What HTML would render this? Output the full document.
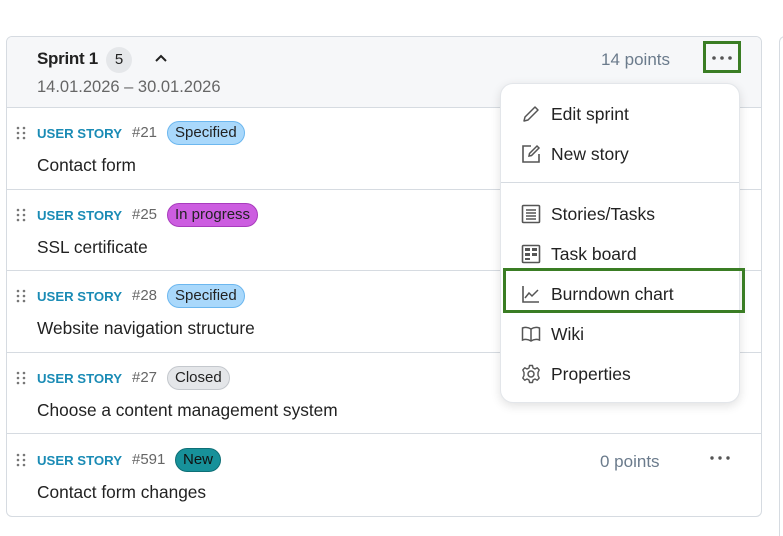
<!DOCTYPE html>
<html><head><style>
*{box-sizing:border-box;margin:0;padding:0}
body{width:783px;height:531px;background:#fff;font-family:"Liberation Sans",sans-serif;color:#222;position:relative;overflow:hidden}
.card{position:absolute;left:6px;top:36px;width:756px;height:481px;border:1px solid #d6dbe1;border-radius:6px;overflow:hidden;background:#fff}
.side{position:absolute;left:779px;top:36px;width:10px;height:500px;border-left:1px solid #d6dbe1;border-top:1px solid #d6dbe1;border-radius:6px 0 0 0}
.hdr{position:absolute;left:0;top:0;right:0;height:71px;background:#f6f7f9;border-bottom:1px solid #d6dbe1}
.t{position:absolute;white-space:nowrap}
.row{position:absolute;left:0;right:0;border-bottom:1px solid #d6dbe1}
.us{color:#1a8bb5;font-weight:bold;font-size:13.2px}
.num{color:#666;font-size:15px}
.badge{position:absolute;height:24px;border-radius:12px;font-size:15px;line-height:22px;padding:0 7px;border:1px solid}
.title{font-size:17.3px;color:#222}
.menu{position:absolute;left:500px;top:83px;width:240px;height:320px;background:#fff;border:1px solid #e3e6ea;border-radius:13px;box-shadow:0 3px 10px rgba(0,0,0,.12)}
.mi{position:absolute;left:50px;font-size:17.5px;color:#222}
.ic{position:absolute;left:20px;width:20px;height:20px}
</style></head><body>
<div class="side"></div>
<div class="card">
 <div class="hdr">
  <div class="t" style="left:30px;top:12px;font-size:17px;font-weight:bold;letter-spacing:-0.3px">Sprint 1</div>
  <div class="t" style="left:99px;top:10px;width:26px;height:26px;border-radius:13px;background:#e5e7ea;text-align:center;line-height:26px;font-size:15px">5</div>
  <svg class="t" style="left:147px;top:16px" width="14" height="10" viewBox="0 0 14 10"><path d="M2 8 L7 3 L12 8" fill="none" stroke="#222" stroke-width="2"/></svg>
  <div class="t" style="left:30px;top:41px;font-size:16.5px;color:#666">14.01.2026 – 30.01.2026</div>
  <div class="t" style="left:594px;top:13px;font-size:17px;color:#6b7b8c">14 points</div>
  <div class="t" style="left:696px;top:4px;width:38px;height:32px;border:3px solid #3a7d24"></div>
  <svg class="t" style="left:703px;top:18px" width="24" height="6"><circle cx="4" cy="3" r="1.8" fill="#555"/><circle cx="12" cy="3" r="1.8" fill="#555"/><circle cx="20" cy="3" r="1.8" fill="#555"/></svg>
 </div>
 <div class="row" style="top:71px;height:82px"></div>
 <div class="row" style="top:153px;height:81px"></div>
 <div class="row" style="top:234px;height:82px"></div>
 <div class="row" style="top:316px;height:81px"></div>
</div>
<svg width="783" height="531" style="position:absolute;left:0;top:0">
 <g fill="#777">
  <g id="g"><circle cx="18" cy="128" r="1.3"/><circle cx="24" cy="128" r="1.3"/><circle cx="18" cy="133" r="1.3"/><circle cx="24" cy="133" r="1.3"/><circle cx="18" cy="138" r="1.3"/><circle cx="24" cy="138" r="1.3"/></g>
  <use href="#g" y="82"/><use href="#g" y="163"/><use href="#g" y="245"/><use href="#g" y="327"/>
 </g>
</svg>
<div class="t us" style="left:37px;top:126px">USER STORY</div><div class="t num" style="left:132px;top:124px">#21</div>
<div class="badge" style="left:167px;top:121px;background:#a9d8fb;border-color:#6cb7ef">Specified</div>
<div class="t title" style="left:37px;top:155px">Contact form</div>
<div class="t us" style="left:37px;top:208px">USER STORY</div><div class="t num" style="left:132px;top:206px">#25</div>
<div class="badge" style="left:167px;top:203px;background:#cc5de0;border-color:#a83cbd">In progress</div>
<div class="t title" style="left:37px;top:237px">SSL certificate</div>
<div class="t us" style="left:37px;top:289px">USER STORY</div><div class="t num" style="left:132px;top:287px">#28</div>
<div class="badge" style="left:167px;top:284px;background:#a9d8fb;border-color:#6cb7ef">Specified</div>
<div class="t title" style="left:37px;top:318px">Website navigation structure</div>
<div class="t us" style="left:37px;top:371px">USER STORY</div><div class="t num" style="left:132px;top:369px">#27</div>
<div class="badge" style="left:167px;top:366px;background:#e4e6e9;border-color:#c4c8cd">Closed</div>
<div class="t title" style="left:37px;top:400px">Choose a content management system</div>
<div class="t us" style="left:37px;top:453px">USER STORY</div><div class="t num" style="left:132px;top:451px">#591</div>
<div class="badge" style="left:175px;top:448px;background:#17919a;border-color:#0e6f76;color:#111">New</div>
<div class="t title" style="left:37px;top:482px">Contact form changes</div>
<div class="t" style="left:600px;top:452px;font-size:17px;color:#6b7b8c">0 points</div>
<svg class="t" style="left:709px;top:455px" width="24" height="6"><circle cx="3" cy="3" r="1.7" fill="#555"/><circle cx="11" cy="3" r="1.7" fill="#555"/><circle cx="19" cy="3" r="1.7" fill="#555"/></svg>

<div class="menu">
 <svg class="ic" style="top:20px" viewBox="0 0 20 20"><path d="M3 17 L4 13 L14 3 L17 6 L7 16 Z" fill="none" stroke="#555" stroke-width="1.5" stroke-linejoin="round"/></svg>
 <div class="mi" style="top:20px">Edit sprint</div>
 <svg class="ic" style="top:60px" viewBox="0 0 20 20"><path d="M10 2 H2 V18 H18 V10" fill="none" stroke="#555" stroke-width="1.6"/><path d="M8 12 L8.5 9.5 L16 2 L18 4 L10.5 11.5 Z" fill="none" stroke="#555" stroke-width="1.5"/></svg>
 <div class="mi" style="top:60px">New story</div>
 <div style="position:absolute;left:0;right:0;top:98px;border-top:1px solid #d6dbe1"></div>
 <svg class="ic" style="top:120px" viewBox="0 0 20 20"><rect x="1.5" y="1.5" width="17" height="17" rx="1" fill="none" stroke="#555" stroke-width="1.6"/><path d="M5 6H15M5 9H15M5 12H15M5 15H15" stroke="#555" stroke-width="1.5"/></svg>
 <div class="mi" style="top:120px">Stories/Tasks</div>
 <svg class="ic" style="top:160px" viewBox="0 0 20 20"><rect x="1.5" y="1.5" width="17" height="17" rx="1" fill="none" stroke="#555" stroke-width="1.6"/><rect x="4" y="4" width="5" height="3" fill="#555"/><rect x="11" y="4" width="5" height="3" fill="#555"/><rect x="4" y="9" width="5" height="3" fill="#555"/><rect x="11" y="9" width="5" height="3" fill="#555"/><rect x="4" y="14" width="5" height="2" fill="#555"/></svg>
 <div class="mi" style="top:160px">Task board</div>
 <div style="position:absolute;left:2px;top:184px;width:242px;height:45px;border:3px solid #3a7d24"></div>
 <svg class="ic" style="top:200px" viewBox="0 0 20 20"><path d="M2 2 V18 H18" fill="none" stroke="#555" stroke-width="1.6"/><path d="M4 14 L8 9 L11 12 L17 6" fill="none" stroke="#555" stroke-width="1.5"/></svg>
 <div class="mi" style="top:200px">Burndown chart</div>
 <svg class="ic" style="top:240px" viewBox="0 0 20 20"><path d="M10 5 C7 3 4 3 1.5 4 V16 C4 15 7 15 10 17 C13 15 16 15 18.5 16 V4 C16 3 13 3 10 5 Z M10 5 V17" fill="none" stroke="#555" stroke-width="1.5"/></svg>
 <div class="mi" style="top:240px">Wiki</div>
 <svg class="ic" style="top:280px" viewBox="0 0 20 20"><circle cx="10" cy="10" r="3" fill="none" stroke="#555" stroke-width="1.5"/><path d="M8.5 1.5H11.5L12 4L14 5L16.3 3.8L18.2 6L17 8.5V11.5L18.2 14L16.3 16.2L14 15L12 16L11.5 18.5H8.5L8 16L6 15L3.7 16.2L1.8 14L3 11.5V8.5L1.8 6L3.7 3.8L6 5L8 4Z" fill="none" stroke="#555" stroke-width="1.4" stroke-linejoin="round"/></svg>
 <div class="mi" style="top:280px">Properties</div>
</div>
</body></html>
